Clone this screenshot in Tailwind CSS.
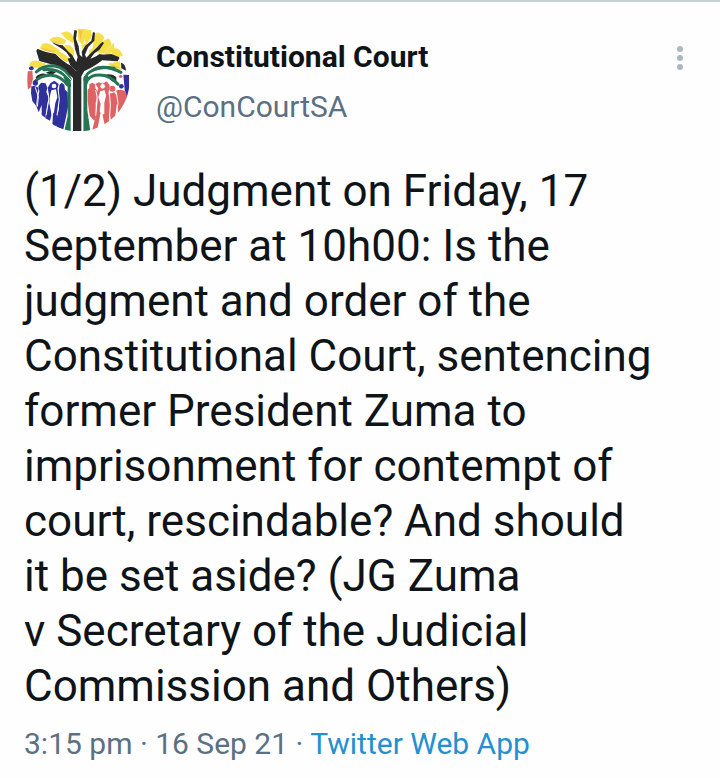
<!DOCTYPE html>
<html lang="en">
<head>
<meta charset="utf-8">
<meta name="viewport" content="width=device-width, initial-scale=1">
<title>Constitutional Court</title>
<script src="https://cdn.jsdelivr.net/npm/@tailwindcss/browser@4"></script>
</head>
<body class="bg-[#fefefe] font-[Roboto,sans-serif] text-[#0f1419]">
<article class="border-t-2 border-[#c7d0d6] px-6 pt-6">
  <header class="flex items-start">
    <svg class="size-27 shrink-0" viewBox="27 33 324 324" role="img" aria-label="Constitutional Court logo">
      <defs><clipPath id="round"><circle cx="190" cy="195" r="154"/></clipPath></defs>
      <g clip-path="url(#round)">
        <g fill="#f5e04a">
          <path d="M44 143Q60 128 94 146L79 158Q61 161 43 153Z"/>
          <path d="M75 101Q80 78 107 88L136 107L122 117Q99 113 75 101Z"/>
          <path d="M102 75Q123 55 154 77L147 88Q122 88 102 75Z"/>
          <path d="M108 119L130 108Q156 119 170 139L151 142Q127 139 108 119Z"/>
          <path d="M138 55Q159 40 175 64L176 84Q157 79 138 55Z"/>
          <path d="M145 94Q166 82 178 108L176 125Q158 120 145 94Z"/>
          <path d="M188 40L205 39L213 57L204 90L190 77Z"/>
          <path d="M207 38L227 42L231 63L214 90L206 66Z"/>
          <path d="M200 91L216 83L220 98L206 122Z"/>
          <path d="M239 57L256 47L268 68L256 89L232 101Z"/>
          <path d="M223 106L243 94L250 106L221 130Z"/>
          <path d="M265 77L284 68L290 89L266 115L247 114Z"/>
          <path d="M264 117L297 83L298 105L278 121Z"/>
          <path d="M289 107Q309 88 324 121L309 128L292 120Z"/>
          <path d="M282 142Q304 129 324 147L323 166Q304 165 282 149Z"/>
        </g>
        <g fill="#f0a33b" opacity=".45"><path d="M80 99L119 109L115 113L83 105Z"/><path d="M107 76L139 88L128 90Z"/><path d="M118 122L157 137L139 139Z"/><path d="M191 44L203 47L196 76Z"/><path d="M287 148L316 158L302 159Z"/></g>
        <g fill="#292929" stroke="#fff" stroke-width="4" paint-order="stroke">
          <path d="M174 348V189L144 162Q128 150 108 148L73 138L61 98Q91 113 121 116Q147 143 168 152L184 169L207 149Q231 137 253 117L313 129L308 139L262 136Q233 158 208 168L199 184V348Z"/>
          <path d="M91 174Q108 163 123 172L111 179Z"/>
          <path d="M62 187Q75 172 94 177L88 186L65 193Z"/>
          <path d="M267 180Q291 174 304 187L304 205L291 199L278 186Z"/>
          <path d="M318 143Q331 145 333 167L319 160Z"/>
        </g>
        <path fill="#292929" d="M111 80Q128 91 142 90L161 111L171 119L184 142L188 126L180 102L175 69L178 45L186 47L183 72L191 94L194 119L202 127L200 110L211 92L229 77L234 51L240 53L238 77L219 97L210 119L214 128L227 115L244 99L262 80L267 84L253 105L238 115L226 131L253 120L289 117L313 127L312 133L263 130L230 147L207 152L185 169L166 151L158 131L166 129L154 112L137 99L117 87Z"/>
        <g fill="none" stroke="#257454" stroke-width="9" stroke-linecap="round">
          <path d="M64 171Q84 150 119 153Q151 157 166 193"/>
          <path d="M86 164Q125 160 147 180Q158 190 165 212"/>
          <path d="M59 201Q77 180 109 181Q136 182 158 210"/>
          <path d="M318 172Q271 147 234 164Q214 172 209 194"/>
          <path d="M297 160Q246 150 213 179"/>
          <path d="M309 208Q281 175 241 181Q222 184 211 204"/>
        </g>
        <path fill="#257454" d="M162 182L167 193V348H148L158 303V212L145 186ZM205 348V187L216 178L223 191L216 211L217 286L226 348Z"/>
        <g fill="#30309d">
          <ellipse cx="49" cy="160" rx="7" ry="6"/>
          <circle cx="61" cy="204" r="8"/>
          <path d="M49 214L58 213L71 218L67 243L63 272L52 258L48 234Z"/>
          <path d="M73 229L70 214L78 203L92 205L97 219L94 232L101 244L96 277L91 308L80 300L80 270L71 292L64 274Z"/>
          <path d="M98 218L106 205L118 197L131 207L128 218L133 242L130 271L125 342L112 330L115 279L105 317L91 310L99 269L102 242Z"/>
          <path d="M127 232L132 224L133 210L140 203L148 209L150 224L158 232L159 275L153 306L144 348H126L125 312L132 279Z"/>
          <path d="M325 179L342 180V233L335 252L329 225Z"/>
          <circle cx="319" cy="214" r="7"/>
        </g>
        <g fill="#df6265">
          <path d="M37 169L52 168L54 191L47 217L37 226Z"/>
          <path d="M218 225L223 218L223 208L232 203L240 208L241 220L248 229L242 264L243 306L238 317L224 302L218 258Z"/>
          <path d="M241 207L252 202L263 206L275 199L284 211L281 231L284 272L282 320L269 329L259 283L246 348H231L242 304L246 268L244 239L250 220Z"/>
          <circle cx="292" cy="221" r="9"/>
          <path d="M283 236L298 232L306 243L306 265L300 309L288 318L282 281Z"/>
          <path d="M304 226L317 224L332 228L336 247L329 269L318 295L309 295L306 265Z"/>
          <circle cx="317" cy="184" r="5"/>
        </g>
        <g fill="#fff">
          <circle cx="117" cy="213" r="7"/><path d="M109 226L123 223L127 247L121 264L117 292L110 302L107 284L103 265L105 242Z"/>
          <circle cx="263" cy="214" r="7"/><path d="M256 228L269 226L273 242L268 264L268 296L261 300L254 289L257 267L250 246Z"/>
        </g>
        <g fill="none" stroke="#fff" stroke-width="3"><path d="M170 348V197L144 169M203 348V188L216 170L258 143L297 143"/><path d="M61 217L70 246L67 275M97 230L102 251L93 301M129 220L133 254L126 301"/><path d="M242 225L247 248L242 302M283 232L286 270L283 315M304 232L309 265L303 305"/></g>
      </g>
    </svg>
    <div class="min-w-0 grow pt-1.5 pl-6">
      <h1 class="text-[30px] leading-[50px] font-bold">Constitutional Court</h1>
      <p class="text-[30px] leading-[50px] text-[#5b7083]">@ConCourtSA</p>
    </div>
    <button type="button" aria-label="More options" class="mt-4 flex w-8 shrink-0 justify-center">
      <svg class="h-8 w-2" viewBox="0 0 8 32" fill="#aab8c0"><circle cx="4" cy="7" r="3"/><circle cx="4" cy="16" r="3"/><circle cx="4" cy="25" r="3"/></svg>
    </button>
  </header>
  <p class="pt-[30px] text-[44px] leading-[55px]">(1/2) Judgment on Friday, 17 September at 10h00: Is the judgment and order of the Constitutional Court, sentencing former President Zuma to imprisonment for contempt of court, rescindable? And should it&nbsp;be set aside? (JG Zuma v&nbsp;Secretary of the Judicial Commission and Others)</p>
  <footer class="pt-2.5 pb-3 text-[30px] leading-10 text-[#5b7083]"><time datetime="2021-09-16T15:15">3:15 pm · 16 Sep 21</time> · <a href="#" class="text-[#2490d0]">Twitter Web App</a></footer>
</article>
</body>
</html>
